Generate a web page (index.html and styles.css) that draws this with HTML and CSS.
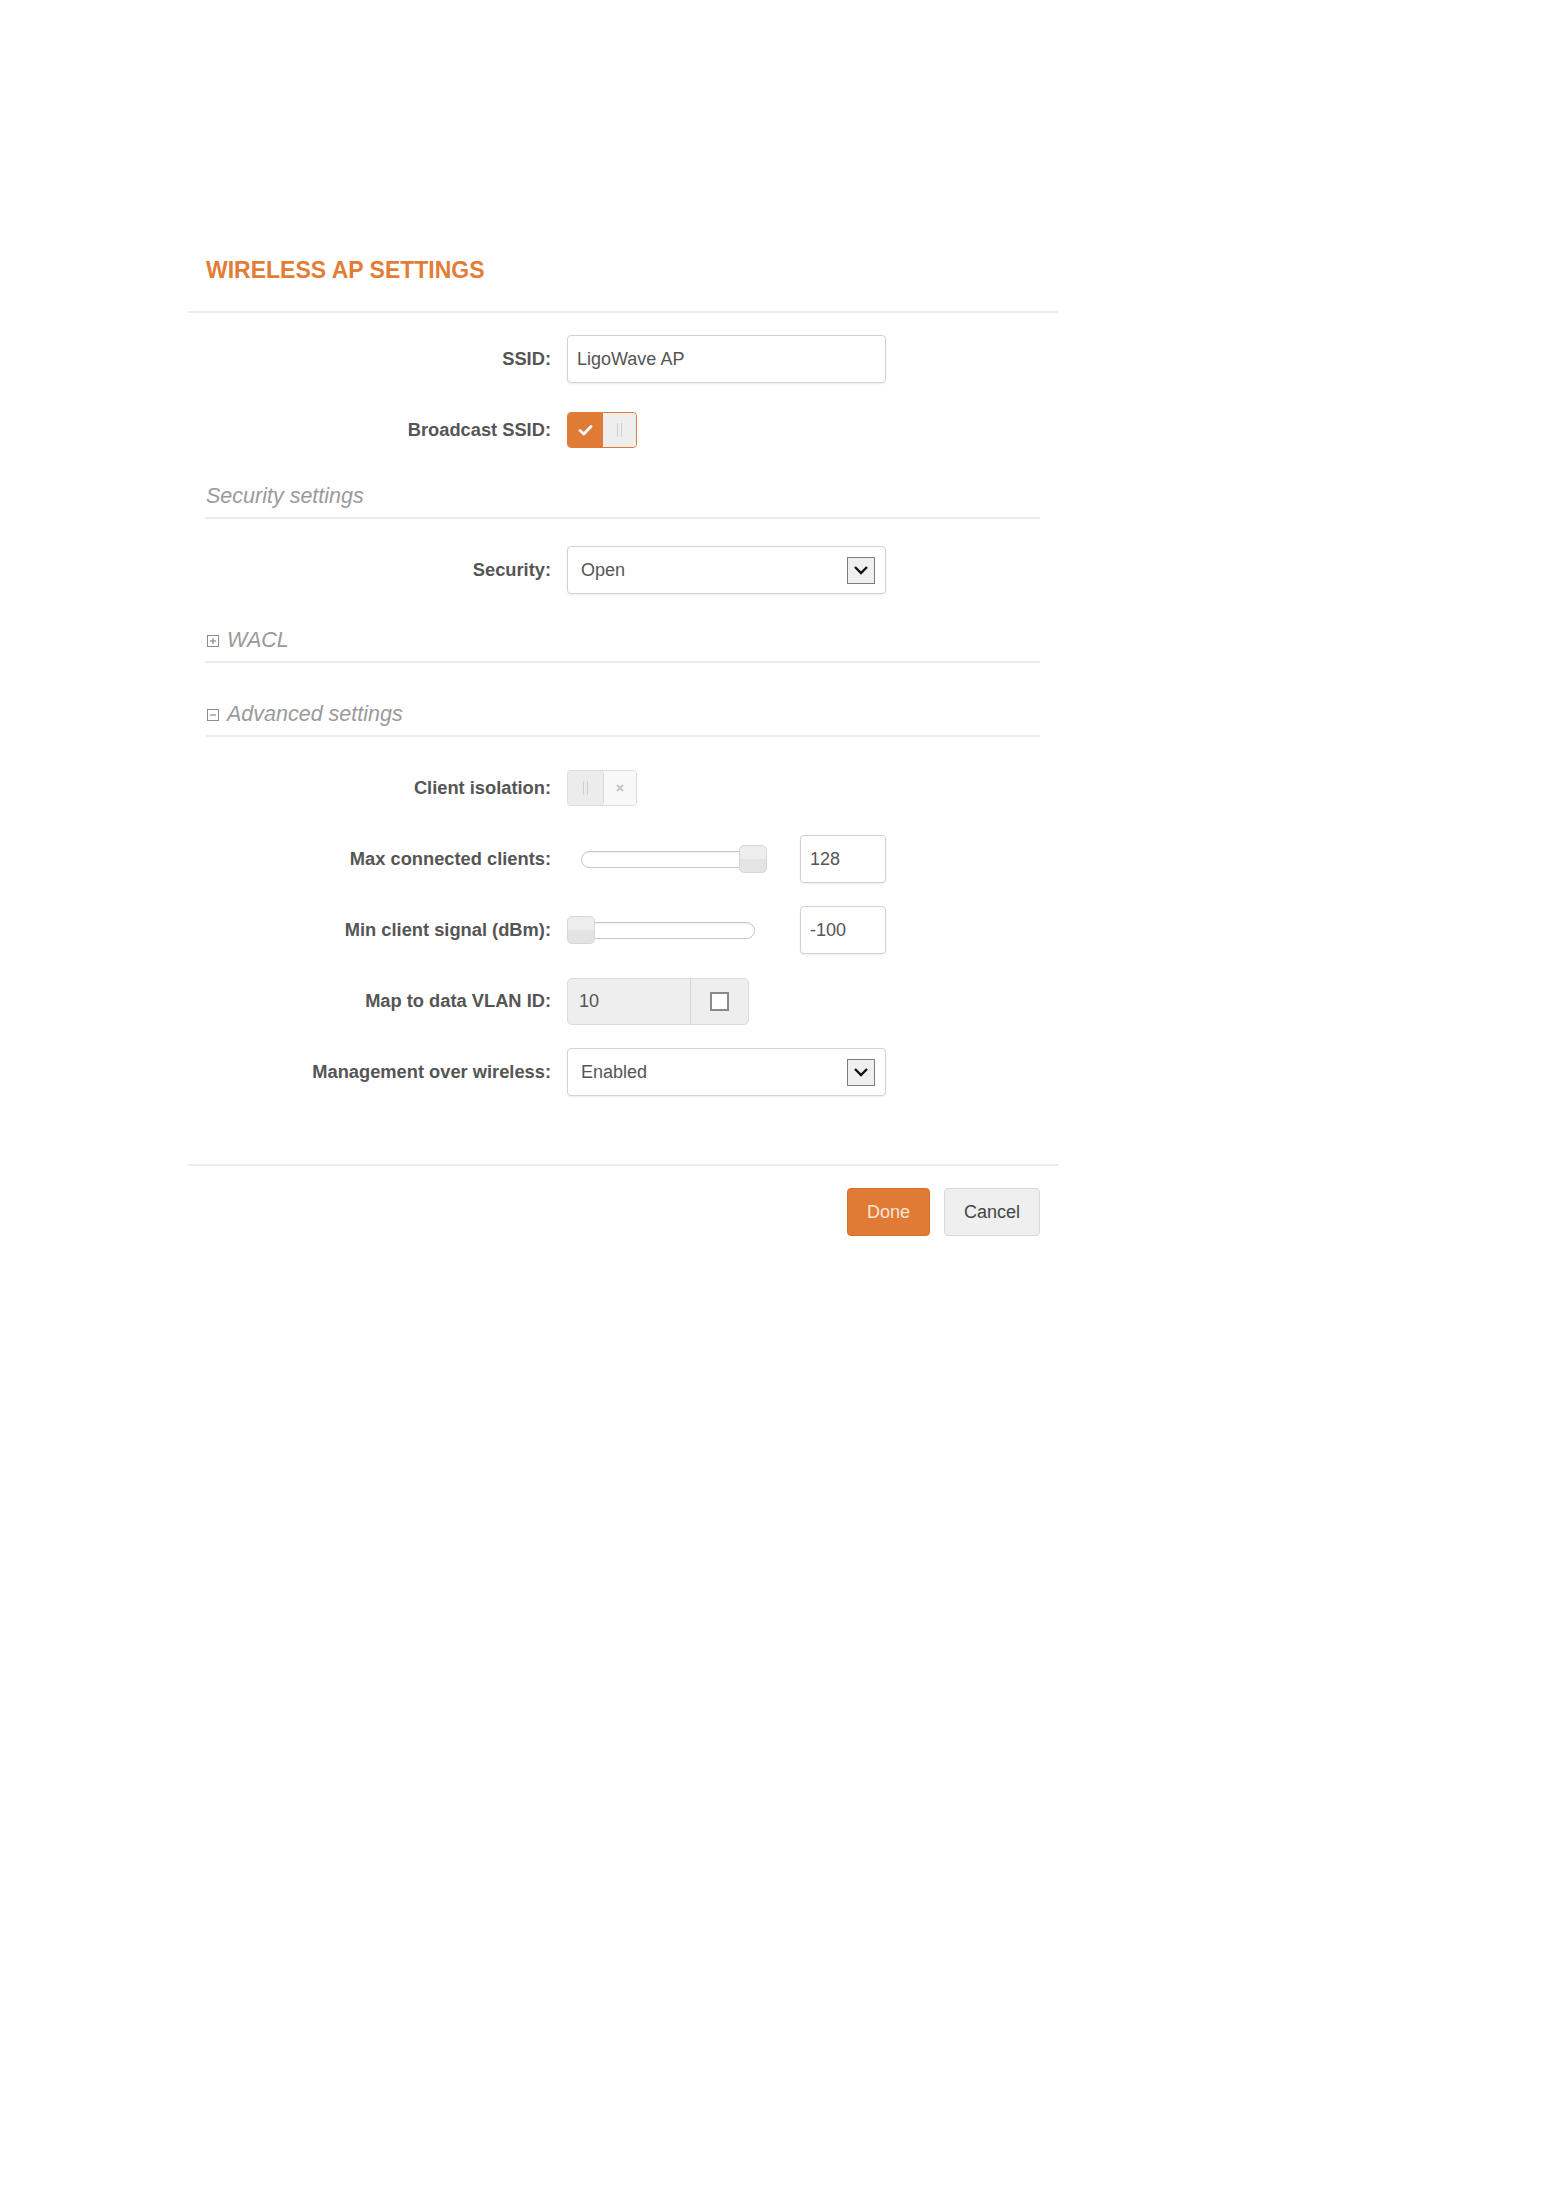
FILE: index.html
```html
<!DOCTYPE html>
<html lang="en">
<head>
    <meta charset="UTF-8" />
    <title>Wireless AP Settings</title>
    <link rel="stylesheet" href="styles.css">
</head>
<body>
    <div class="panel">
        <div class="panel-head">
            <h1>WIRELESS AP SETTINGS</h1>
        </div>

        <!-- Main settings -->
        <form class="panel-body">
            <div class="row">
                <label for="ssid">SSID:</label>
                <input type="text" id="ssid" class="field" value="LigoWave AP" />
            </div>

            <div class="row">
                <label>Broadcast SSID:</label>
                <div class="switch switch-on">
                    <span class="switch-mark">
                        <svg width="15" height="12" viewBox="0 0 15 12"><polyline points="2,6.5 5.8,10 13,2.5" fill="none" stroke="#fff" stroke-width="2.8" stroke-linecap="round" stroke-linejoin="round"/></svg>
                    </span>
                    <span class="switch-knob"><i class="grip"></i></span>
                </div>
            </div>

            <div class="section-title">Security settings</div>

            <div class="row">
                <label>Security:</label>
                <div class="field select">
                    <span>Open</span>
                    <span class="select-arrow">
                        <svg width="16" height="10" viewBox="0 0 16 10"><polyline points="2,2 8,8 14,2" fill="none" stroke="#111" stroke-width="2.4"/></svg>
                    </span>
                </div>
            </div>

            <!-- Collapsible sections -->
            <div class="section-title fold" id="wacl">
                <svg class="fold-icon" width="12" height="12" viewBox="0 0 12 12"><rect x="0.5" y="0.5" width="11" height="11" fill="none" stroke="#8c8c8c"/><line x1="3" y1="6" x2="9" y2="6" stroke="#777"/><line x1="6" y1="3" x2="6" y2="9" stroke="#777"/></svg>
                WACL
            </div>

            <div class="section-title fold" id="advanced">
                <svg class="fold-icon" width="12" height="12" viewBox="0 0 12 12"><rect x="0.5" y="0.5" width="11" height="11" fill="none" stroke="#8c8c8c"/><line x1="3" y1="6" x2="9" y2="6" stroke="#777"/></svg>
                Advanced settings
            </div>

            <div class="row">
                <label>Client isolation:</label>
                <div class="switch switch-off">
                    <span class="switch-knob"><i class="grip"></i></span>
                    <span class="switch-mark">
                        <svg width="10" height="10" viewBox="0 0 10 10"><path d="M2 2 L8 8 M8 2 L2 8" stroke="#c8c8c8" stroke-width="2.2"/></svg>
                    </span>
                </div>
            </div>

            <div class="row">
                <label>Max connected clients:</label>
                <div class="slider-cell">
                    <div class="slider slider-max">
                        <div class="slider-track"></div>
                        <span class="slider-handle"></span>
                    </div>
                    <input type="text" class="field number" value="128" />
                </div>
            </div>

            <div class="row">
                <label>Min client signal (dBm):</label>
                <div class="slider-cell">
                    <div class="slider slider-min">
                        <div class="slider-track"></div>
                        <span class="slider-handle"></span>
                    </div>
                    <input type="text" class="field number" value="-100" />
                </div>
            </div>

            <div class="row">
                <label>Map to data VLAN ID:</label>
                <div class="vlan">
                    <span class="vlan-value">10</span>
                    <span class="vlan-check"><i class="checkbox"></i></span>
                </div>
            </div>

            <div class="row">
                <label>Management over wireless:</label>
                <div class="field select">
                    <span>Enabled</span>
                    <span class="select-arrow">
                        <svg width="16" height="10" viewBox="0 0 16 10"><polyline points="2,2 8,8 14,2" fill="none" stroke="#111" stroke-width="2.4"/></svg>
                    </span>
                </div>
            </div>
        </form>

        <div class="panel-foot">
            <button type="button" class="btn btn-primary">Done</button>
            <button type="button" class="btn">Cancel</button>
        </div>
    </div>
</body>
</html>
```

FILE: styles.css
```css
/* Page */
body {
    margin: 0;
    background: #fff;
    font-family: 'Liberation Sans', Arial, sans-serif;
    font-size: 18px;
    color: #555;
}

.panel {
    width: 871px;
    margin: 255px 0 0 188px;
}

.panel-head {
    padding: 0 18px 26px;
    border-bottom: 2px solid #ebebeb;
}

h1 {
    margin: 0;
    font-size: 23px;
    line-height: 30px;
    font-weight: bold;
    color: #e27d36;
}

/* Form rows */
.panel-body {
    display: flex;
    flex-direction: column;
    padding: 22px 19px 45px 17px;
    margin: 0;
}

.row {
    display: grid;
    grid-template-columns: 346px auto;
    column-gap: 16px;
    align-items: center;
    height: 48px;
    margin-bottom: 23px;
}

.row label {
    text-align: right;
    font-size: 18.3px;
    font-weight: bold;
    color: #555;
}

.field {
    box-sizing: border-box;
    width: 319px;
    height: 48px;
    padding: 0 9px;
    border: 1px solid #d2d2d2;
    border-radius: 4px;
    box-shadow: 0 1px 2px rgba(0, 0, 0, 0.08);
    background: #fff;
    font-family: inherit;
    font-size: 18px;
    color: #555;
}

.select {
    display: flex;
    align-items: center;
    justify-content: space-between;
    padding: 0 10px 0 13px;
}

.select-arrow {
    display: flex;
    align-items: center;
    justify-content: center;
    box-sizing: border-box;
    width: 28px;
    height: 27px;
    border: 1px solid #7c7c7c;
    background: #efefef;
}

/* Section headers */
.section-title {
    margin: 7px 0 27px;
    padding: 0 0 8px 1px;
    border-bottom: 2px solid #ececec;
    font-size: 21.5px;
    font-style: italic;
    line-height: 25px;
    color: #9a9a9a;
}

.fold {
    display: flex;
    align-items: center;
    margin-top: 11px;
}

#wacl {
    margin-bottom: 28px;
}

.fold-icon {
    margin: 0 8px 0 1px;
}

/* On/off switches */
.switch {
    display: flex;
    box-sizing: border-box;
    width: 70px;
    height: 36px;
    border-radius: 4px;
    overflow: hidden;
}

.switch span {
    display: flex;
    align-items: center;
    justify-content: center;
}

.switch-on {
    border: 1px solid #e07b35;
}

.switch-on .switch-mark {
    width: 35px;
    background: #e07b35;
}

.switch-on .switch-knob {
    flex: 1;
    background: #eeeeee;
    border-radius: 3px;
}

.switch-off {
    border: 1px solid #dcdcdc;
}

.switch-off .switch-knob {
    width: 35px;
    background: #ececec;
    border-right: 1px solid #dadada;
    border-radius: 3px;
}

.switch-off .switch-mark {
    flex: 1;
    background: #f8f8f8;
}

.grip {
    width: 3px;
    height: 14px;
    border-left: 1px solid #cfcfcf;
    border-right: 1px solid #cfcfcf;
}

/* Sliders */
.slider-cell {
    display: flex;
    align-items: center;
    justify-content: space-between;
    width: 319px;
}

.slider {
    position: relative;
}

.slider-max {
    width: 184px;
    margin-left: 14px;
}

.slider-min {
    width: 188px;
}

.slider-track {
    box-sizing: border-box;
    height: 17px;
    border: 1px solid #c6c6c6;
    border-radius: 9px;
    background: #fff;
    box-shadow: inset 0 1px 2px rgba(0, 0, 0, 0.06);
}

.slider-handle {
    position: absolute;
    top: -6px;
    box-sizing: border-box;
    width: 28px;
    height: 28px;
    border: 1px solid #d6d6d6;
    border-radius: 5px;
    background: linear-gradient(#ededed 50%, #e4e4e4 50%);
}

.slider-max .slider-handle {
    right: -2px;
}

.slider-min .slider-handle {
    left: 0;
}

.number {
    width: 86px;
    padding-left: 9px;
}

/* VLAN field */
.vlan {
    display: flex;
    box-sizing: border-box;
    width: 182px;
    height: 47px;
    border: 1px solid #dcdcdc;
    border-radius: 5px;
    background: #eeeeee;
}

.vlan-value {
    display: flex;
    align-items: center;
    width: 123px;
    padding-left: 11px;
    box-sizing: border-box;
    border-right: 1px solid #d4d4d4;
}

.vlan-check {
    flex: 1;
    display: flex;
    align-items: center;
    justify-content: center;
}

.checkbox {
    box-sizing: border-box;
    width: 19px;
    height: 19px;
    border: 2px solid #8a8a8a;
    background: #fff;
}

/* Footer buttons */
.panel-foot {
    display: flex;
    justify-content: flex-end;
    gap: 14px;
    padding: 22px 19px 0;
    border-top: 2px solid #ebebeb;
}

.btn {
    height: 48px;
    padding: 0 19px;
    border: 1px solid #d8d8d8;
    border-radius: 4px;
    background: #efefef;
    font-family: inherit;
    font-size: 18px;
    color: #444;
    cursor: pointer;
}

.btn-primary {
    border-color: #d5702e;
    background: #e07b35;
    color: #fde6d4;
}
```
